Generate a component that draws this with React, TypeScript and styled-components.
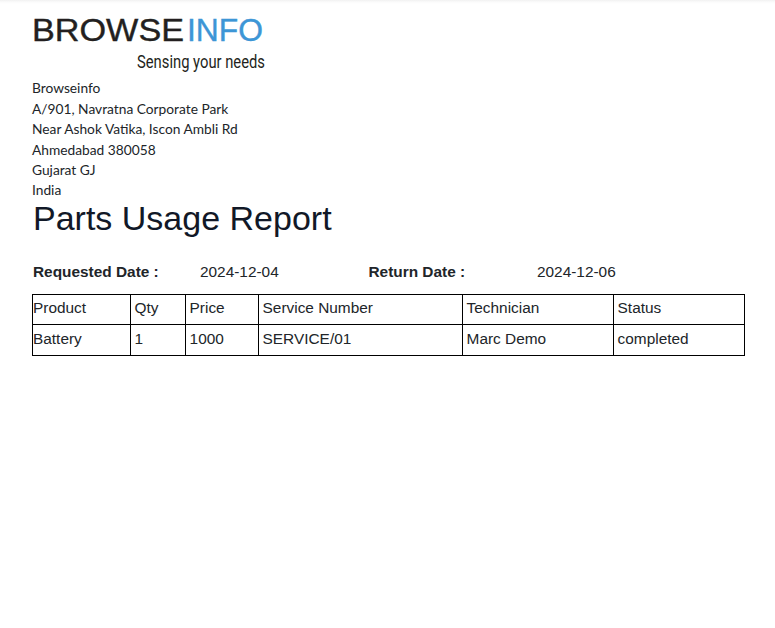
import styled, { createGlobalStyle } from 'styled-components';

const GlobalStyle = createGlobalStyle`
	html, body {
		margin: 0;
		padding: 0;
		background: #ffffff;
	}
`;

const Page = styled.main`
	width: 775px;
	height: 628px;
	box-sizing: border-box;
	padding: 0 30px 0 32px;
	overflow: hidden;
	background: linear-gradient(#f1f1f1 0, #fbfbfb 2px, #ffffff 4px);
`;

const Logo = styled.svg`
	display: block;
	width: 300px;
	height: 78px;
`;

const Address = styled.address`
	padding-top: 0.4px;
	font-family: 'Lato', sans-serif;
	font-style: normal;
	font-size: 13.75px;
	line-height: 20.4px;
	color: #212529;
`;

const Title = styled.h1`
	margin: 0;
	padding-left: 1px;
	font-family: 'Liberation Sans', sans-serif;
	font-weight: 400;
	font-size: 34px;
	line-height: 35px;
	color: #111827;
`;

const DateRow = styled.div`
	display: grid;
	grid-template-columns: 167px 168.5px 168.5px auto;
	margin-top: 26px;
	margin-bottom: 12px;
	padding-left: 1px;
	font-family: 'Liberation Sans', sans-serif;
	font-size: 15.4px;
	line-height: 20px;
	color: #212529;
`;

const DateLabel = styled.strong`
	font-weight: 700;
`;

const DateValue = styled.span`
	font-weight: 400;
`;

const Table = styled.table`
	width: 712px;
	table-layout: fixed;
	border-collapse: collapse;
	font-family: 'Liberation Sans', sans-serif;
	font-size: 15.4px;
	color: #212529;
`;

const Cell = styled.td<{ $rowHeight: number; $bottom: number }>`
	height: ${(props) => props.$rowHeight}px;
	box-sizing: border-box;
	padding: 0 0 ${(props) => props.$bottom}px 3.6px;
	border: 1px solid #000000;
	font-weight: 400;
	text-align: left;
	vertical-align: middle;

	&:first-child {
		padding-left: 0;
	}
`;

const columns = [98, 55, 73, 204, 151, 131];
const headers = ['Product', 'Qty', 'Price', 'Service Number', 'Technician', 'Status'];
const row = ['Battery', '1', '1000', 'SERVICE/01', 'Marc Demo', 'completed'];
const addressLines = [
	'Browseinfo',
	'A/901, Navratna Corporate Park',
	'Near Ashok Vatika, Iscon Ambli Rd',
	'Ahmedabad 380058',
	'Gujarat GJ',
	'India',
];

export default function App() {
	return (
		<>
			<GlobalStyle />
			<Page>
				<Logo viewBox="0 0 300 78" role="img" aria-label="Browseinfo logo">
					<text
						x="0"
						y="41"
						fontFamily="'Liberation Sans', sans-serif"
						fontSize="32"
						textLength="152"
						lengthAdjust="spacingAndGlyphs"
						fill="#231f20"
						stroke="#231f20"
						strokeWidth="0.4"
					>
						BROWSE
					</text>
					<text
						x="155"
						y="41"
						fontFamily="'Liberation Sans', sans-serif"
						fontSize="32"
						textLength="76"
						lengthAdjust="spacingAndGlyphs"
						fill="#3d96d6"
						stroke="#3d96d6"
						strokeWidth="0.4"
					>
						INFO
					</text>
					<text
						x="105"
						y="67.5"
						fontFamily="'Roboto', sans-serif"
						fontSize="19"
						textLength="128"
						lengthAdjust="spacingAndGlyphs"
						fill="#231f20"
					>
						Sensing your needs
					</text>
				</Logo>
				<Address>
					{addressLines.map((line) => (
						<div key={line}>{line}</div>
					))}
				</Address>
				<Title>Parts Usage Report</Title>
				<DateRow>
					<DateLabel>Requested Date :</DateLabel>
					<DateValue>2024-12-04</DateValue>
					<DateLabel>Return Date :</DateLabel>
					<DateValue>2024-12-06</DateValue>
				</DateRow>
				<Table>
					<colgroup>
						{columns.map((width, index) => (
							<col key={index} width={width} />
						))}
					</colgroup>
					<thead>
						<tr>
							{headers.map((header) => (
								<Cell as="th" key={header} $rowHeight={30} $bottom={3}>
									{header}
								</Cell>
							))}
						</tr>
					</thead>
					<tbody>
						<tr>
							{row.map((value) => (
								<Cell key={value} $rowHeight={31} $bottom={1}>
									{value}
								</Cell>
							))}
						</tr>
					</tbody>
				</Table>
			</Page>
		</>
	);
}
